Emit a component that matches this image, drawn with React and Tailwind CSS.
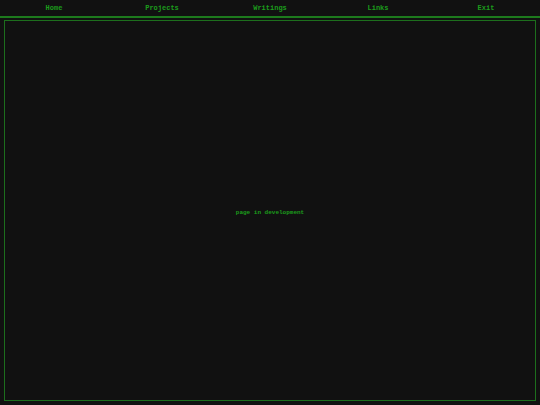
export default function App() {
  const links = ["Home", "Projects", "Writings", "Links", "Exit"];

  return (
    <div className="flex flex-col h-[405px] w-full bg-[#111111] text-[#1c9c1c] font-['Liberation_Mono',monospace]">
      <nav className="grid grid-cols-5 h-[18px] border-b-2 border-[#1d7a1d] shrink-0 text-[7px] font-bold">
        {links.map((link) => (
          <a key={link} href="#" className="flex justify-center pt-[4px] leading-[8px]">
            {link}
          </a>
        ))}
      </nav>
      <div className="flex-1 px-[4px] pt-[2px] pb-[4px] flex">
        <div className="flex-1 flex items-center justify-center border border-[#1d6e1d]">
          <p className="text-[6px] font-bold mt-[3px]">page in development</p>
        </div>
      </div>
    </div>
  );
}
